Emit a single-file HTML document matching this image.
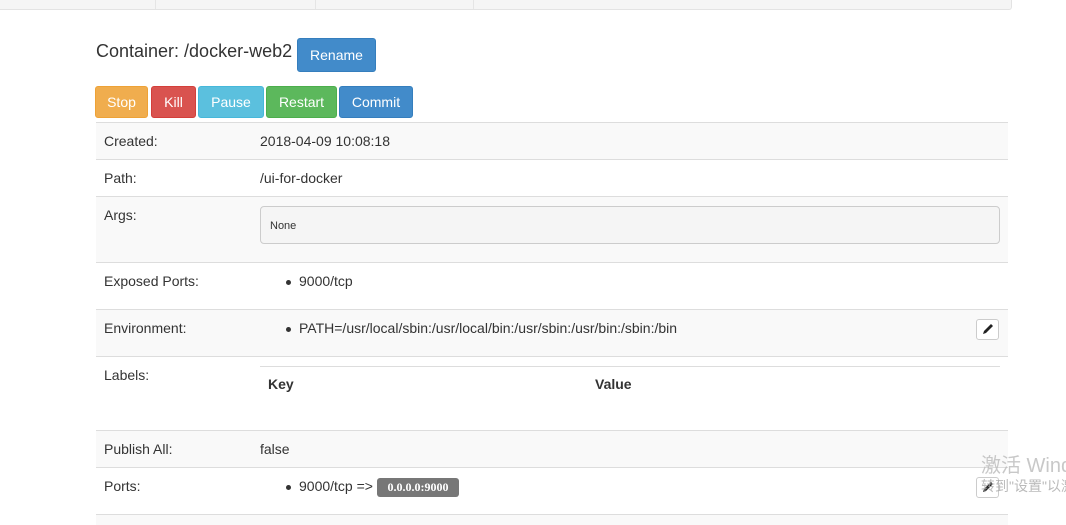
<!DOCTYPE html>
<html><head><meta charset="utf-8"><style>
body{margin:0;width:1066px;height:525px;overflow:hidden;background:#fff;font-family:"Liberation Sans",Arial,sans-serif;font-size:14px;color:#333;position:relative}
.abs{position:absolute}
.btn{position:absolute;color:#fff;font-size:14px;text-align:center;line-height:31px;height:32px;border-radius:3px;box-sizing:border-box}
.row{position:absolute;left:96px;width:912px;border-top:1px solid #ddd;box-sizing:border-box}
.lbl{position:absolute;left:8px}
.val{position:absolute;left:164px}
.dot{position:absolute;width:5px;height:5px;border-radius:50%;background:#333}
.edit{position:absolute;left:880px;width:23px;height:21px;border:1px solid #ccc;border-radius:3px;background:#fff;box-sizing:border-box}
</style></head><body>
<div class="abs" style="left:0;top:0;width:1011px;height:9px;background:#f5f5f5;border-bottom:1px solid #e3e3e3;border-right:1px solid #e3e3e3;border-bottom-right-radius:3px"></div>
<div class="abs" style="left:155px;top:0;width:1px;height:9px;background:#e5e5e5"></div>
<div class="abs" style="left:315px;top:0;width:1px;height:9px;background:#e5e5e5"></div>
<div class="abs" style="left:473px;top:0;width:1px;height:9px;background:#e5e5e5"></div>

<div class="abs" style="left:96px;top:41px;font-size:18px;color:#333">Container: /docker-web2</div>
<div class="btn" style="left:297px;top:38px;width:79px;height:34px;line-height:33px;background:#428bca;border:1px solid #357ebd">Rename</div>

<div class="btn" style="left:95px;top:86px;width:53px;background:#f0ad4e;border:1px solid #eea236">Stop</div>
<div class="btn" style="left:151px;top:86px;width:45px;background:#d9534f;border:1px solid #d43f3a">Kill</div>
<div class="btn" style="left:198px;top:86px;width:66px;background:#5bc0de;border:1px solid #46b8da">Pause</div>
<div class="btn" style="left:266px;top:86px;width:71px;background:#5cb85c;border:1px solid #4cae4c">Restart</div>
<div class="btn" style="left:339px;top:86px;width:74px;background:#428bca;border:1px solid #357ebd">Commit</div>

<div class="row" style="top:122px;height:37px;background:#f9f9f9"><span class="lbl" style="top:10px">Created:</span><span class="val" style="top:10px">2018-04-09 10:08:18</span></div>
<div class="row" style="top:159px;height:37px"><span class="lbl" style="top:10px">Path:</span><span class="val" style="top:10px">/ui-for-docker</span></div>
<div class="row" style="top:196px;height:66px;background:#f9f9f9"><span class="lbl" style="top:10px">Args:</span>
<div class="abs" style="left:164px;top:9px;width:740px;height:38px;background:#f5f5f5;border:1px solid #ccc;border-radius:4px;box-sizing:border-box;font-size:11px;line-height:38px;padding-left:9px;font-family:'Liberation Sans',sans-serif">None</div></div>
<div class="row" style="top:262px;height:47px"><span class="lbl" style="top:10px">Exposed Ports:</span><div class="dot" style="left:190px;top:17px"></div><span class="abs" style="left:203px;top:10px">9000/tcp</span></div>
<div class="row" style="top:309px;height:47px;background:#f9f9f9"><span class="lbl" style="top:10px">Environment:</span><div class="dot" style="left:190px;top:17px"></div><span class="abs" style="left:203px;top:10px">PATH=/usr/local/sbin:/usr/local/bin:/usr/sbin:/usr/bin:/sbin:/bin</span>
<div class="edit" style="top:9px"><svg width="21" height="19" viewBox="0 0 21 19"><path d="M6 14 L7 11 L14 4 L16 6 L9 13 Z" fill="#222"/></svg></div></div>
<div class="row" style="top:356px;height:74px"><span class="lbl" style="top:10px">Labels:</span>
<div class="abs" style="left:164px;top:9px;width:740px;border-top:1px solid #ddd"></div>
<b class="abs" style="left:172px;top:19px">Key</b><b class="abs" style="left:499px;top:19px">Value</b></div>
<div class="row" style="top:430px;height:37px;background:#f9f9f9"><span class="lbl" style="top:10px">Publish All:</span><span class="val" style="top:10px">false</span></div>
<div class="row" style="top:467px;height:47px"><span class="lbl" style="top:10px">Ports:</span><div class="dot" style="left:190px;top:17px"></div><span class="abs" style="left:203px;top:10px">9000/tcp =&gt;</span>
<div class="abs" style="left:281px;top:10px;width:82px;height:19px;background:#777;border-radius:3px;color:#fff;font-weight:bold;font-size:12px;line-height:19px;text-align:center;font-family:'Liberation Serif',serif">0.0.0.0:9000</div>
<div class="edit" style="top:9px"><svg width="21" height="19" viewBox="0 0 21 19"><path d="M6 14 L7 11 L14 4 L16 6 L9 13 Z" fill="#222"/></svg></div></div>
<div class="row" style="top:514px;height:11px;background:#f9f9f9"></div>

<div class="abs" style="left:981px;top:449px;font-size:20px;color:#bbb;white-space:nowrap;font-family:'Liberation Sans','Noto Sans CJK SC',sans-serif;opacity:.8">激活 Windows</div>
<div class="abs" style="left:981px;top:476px;font-size:14px;color:#aaa;white-space:nowrap;font-family:'Liberation Sans','Noto Sans CJK SC',sans-serif;opacity:.8">转到"设置"以激活</div>
</body></html>
